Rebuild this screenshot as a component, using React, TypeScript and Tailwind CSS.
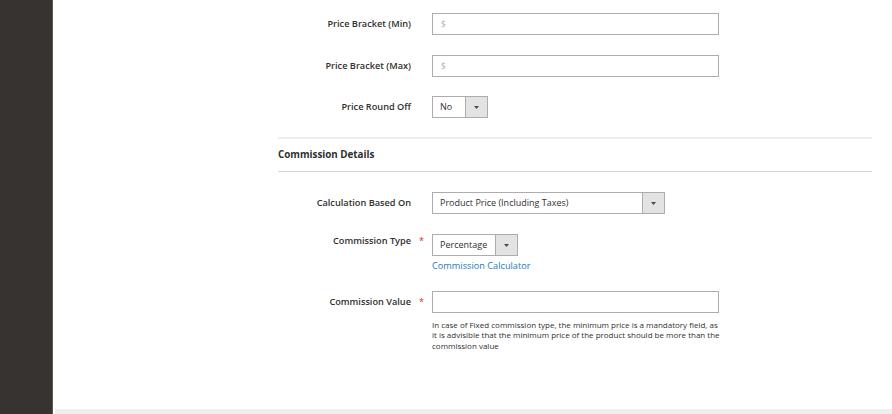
import React from "react";

const font = { fontFamily: '"Open Sans", "Noto Sans", sans-serif' };

function Label({ text, required }: { text: string; required?: boolean }) {
  return (
    <div className="flex w-[154px] shrink-0 items-center justify-end">
      <span className="text-[9.2px] font-semibold text-[#303030]">{text}</span>
      <span className="flex w-[21px] justify-center text-[9px] text-[#e22626]">{required ? "*" : ""}</span>
    </div>
  );
}

function Select({ value, width }: { value: string; width: number }) {
  return (
    <div
      className="flex h-[22px] items-stretch border border-[#adadad] bg-white text-[9px] text-[#303030]"
      style={{ width }}
    >
      <div className="flex flex-1 items-center pl-[7px]">{value}</div>
      <div className="flex w-[22px] items-center justify-center border-l border-[#adadad] bg-[#e3e3e3]">
        <svg width="5" height="3" viewBox="0 0 5 3">
          <path d="M0 0h5L2.5 3z" fill="#514943" />
        </svg>
      </div>
    </div>
  );
}

function TextInput({ placeholder }: { placeholder?: string }) {
  return (
    <div className="flex h-[22px] w-[287px] items-center border border-[#adadad] bg-white pl-[8px] text-[8.5px] text-[#b5b5b5]">
      {placeholder}
    </div>
  );
}

export default function App() {
  return (
    <div className="flex h-[414px] w-[892px] overflow-hidden bg-white" style={font}>
      <aside className="w-[53px] shrink-0 border-r border-[#5e5955] bg-[#373330]" />
      <main className="flex flex-1 flex-col">
        <div className="flex flex-1 flex-col pl-[225px] pr-[20px]">
          <div className="mt-[13px] flex items-center">
            <Label text="Price Bracket (Min)" />
            <TextInput placeholder="$" />
          </div>
          <div className="mt-[20px] flex items-center">
            <Label text="Price Bracket (Max)" />
            <TextInput placeholder="$" />
          </div>
          <div className="mt-[19px] flex items-center">
            <Label text="Price Round Off" />
            <Select value="No" width={56} />
          </div>

          <div className="mt-[19px] h-[2px] bg-[#eeeeee]" />
          <div className="flex h-[32px] items-center text-[9.8px] font-bold text-[#303030]">Commission Details</div>
          <div className="h-px bg-[#d6d6d6]" />

          <div className="mt-[20px] flex items-center">
            <Label text="Calculation Based On" />
            <Select value="Product Price (Including Taxes)" width={233} />
          </div>
          <div className="mt-[20px] flex items-start">
            <Label text="Commission Type" required />
            <div className="flex flex-col">
              <Select value="Percentage" width={86} />
              <a className="mt-[3px] text-[9.2px] text-[#1979c3]">Commission Calculator</a>
            </div>
          </div>
          <div className="mt-[18px] flex items-start">
            <div className="flex h-[22px] items-center">
              <Label text="Commission Value" required />
            </div>
            <div className="flex flex-col">
              <TextInput />
              <p className="mt-[7px] w-[288px] text-[8px] leading-[10.5px] text-[#303030]">
                In case of Fixed commission type, the minimum price is a mandatory field, as it is advisible that the
                minimum price of the product should be more than the commission value
              </p>
            </div>
          </div>
        </div>
        <div className="ml-[2px] h-[5px] bg-[#efefef]" />
      </main>
    </div>
  );
}
